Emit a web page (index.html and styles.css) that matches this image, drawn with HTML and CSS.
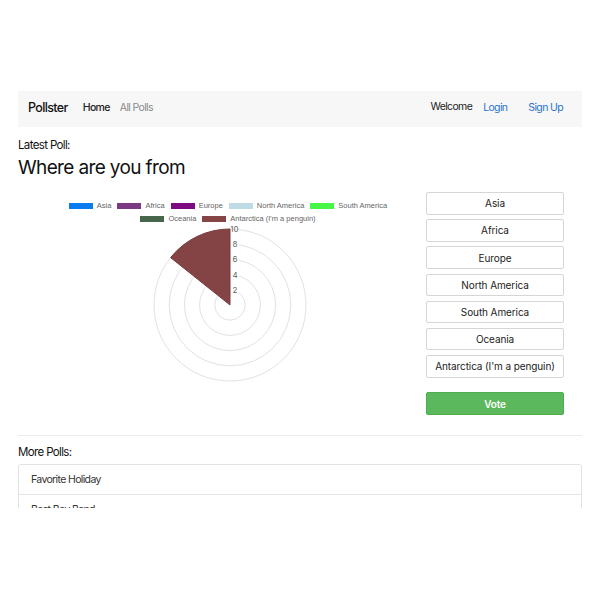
FILE: index.html
```html
<!DOCTYPE html>
<html>
<head>
<meta charset="utf-8">
<title>Pollster</title>
<link rel="stylesheet" href="styles.css">
</head>
<body>
<div class="page">
  <nav class="navbar">
    <span class="brand">Pollster</span>
    <a class="nav-link active">Home</a>
    <a class="nav-link muted">All Polls</a>
    <div class="nav-right">
      <span class="welcome">Welcome</span>
      <a class="nav-link blue">Login</a>
      <a class="nav-link blue signup">Sign Up</a>
    </div>
  </nav>

  <div class="label">Latest Poll:</div>
  <h1 class="title">Where are you from</h1>

  <div class="poll">
    <div class="chart-col">
      <div class="chart-wrap">
        <div class="legend-row">
          <span class="legend-item"><i class="box c-asia"></i>Asia</span>
          <span class="legend-item"><i class="box c-africa"></i>Africa</span>
          <span class="legend-item"><i class="box c-europe"></i>Europe</span>
          <span class="legend-item"><i class="box c-na"></i>North America</span>
          <span class="legend-item"><i class="box c-sa"></i>South America</span>
        </div>
        <div class="legend-row">
          <span class="legend-item"><i class="box c-oceania"></i>Oceania</span>
          <span class="legend-item"><i class="box c-ant"></i>Antarctica (I'm a penguin)</span>
        </div>
        <svg class="polar" width="420" height="160" viewBox="0 0 420 160">
          <g fill="none" stroke="#e2e2e2" stroke-width="1">
            <circle cx="212" cy="80" r="15.2"/>
            <circle cx="212" cy="80" r="30.4"/>
            <circle cx="212" cy="80" r="45.6"/>
            <circle cx="212" cy="80" r="60.8"/>
            <circle cx="212" cy="80" r="76"/>
          </g>
          <g fill="#666" font-size="8" text-anchor="middle">
            <text x="216.5" y="7">10</text>
          </g>
          <path d="M212 80 L212 4 A76 76 0 0 0 152.58 32.61 Z" fill="#844446" stroke="#7a3c3e" stroke-width="1"/>
          <g fill="#ffffff">
            <rect x="213" y="60" width="8" height="9"/>
            <rect x="213" y="45" width="8" height="9"/>
            <rect x="213" y="30" width="8" height="9"/>
            <rect x="213" y="15" width="8" height="9"/>
          </g>
          <g class="ticks" fill="#666" font-size="8" text-anchor="middle">
            <text x="217" y="67.8">2</text>
            <text x="217" y="52.6">4</text>
            <text x="217" y="37.4">6</text>
            <text x="217" y="22.2">8</text>
          </g>
        </svg>
      </div>
    </div>
    <div class="choices">
      <button class="choice">Asia</button>
      <button class="choice">Africa</button>
      <button class="choice">Europe</button>
      <button class="choice">North America</button>
      <button class="choice">South America</button>
      <button class="choice">Oceania</button>
      <button class="choice">Antarctica (I'm a penguin)</button>
      <button class="vote">Vote</button>
    </div>
  </div>

  <hr class="rule">

  <div class="label more">More Polls:</div>
  <ul class="poll-list">
    <li>Favorite Holiday</li>
    <li>Best Boy Band</li>
    <li>Best Pizza Topping</li>
  </ul>
</div>
</body>
</html>
```
FILE: styles.css
```css
html, body {
  margin: 0;
  padding: 0;
  background: #ffffff;
}

body {
  font-family: Inter, "Noto Sans", sans-serif;
  color: #222;
  letter-spacing: -0.04em;
}

.page {
  box-sizing: border-box;
  height: 508px;
  overflow: hidden;
  padding: 91px 18px 0;
}

.navbar {
  box-sizing: border-box;
  display: flex;
  align-items: center;
  height: 36px;
  background: #f7f7f7;
  padding: 0 19px 3px 10px;
}

.brand {
  font-size: 12.5px;
  font-weight: 500;
  color: #111;
  margin-right: 15px;
}

.nav-link {
  font-size: 10.5px;
  margin-right: 10px;
  color: #222;
}

.nav-link.active {
  font-weight: 500;
}

.nav-link.muted {
  color: #8a8a8a;
}

.nav-right {
  margin-left: auto;
  display: flex;
  align-items: center;
}

.welcome {
  font-size: 10.5px;
  color: #222;
  margin-right: 11px;
  position: relative;
  top: -1px;
}

.nav-link.blue {
  color: #2a72cf;
  margin-right: 21px;
}

.nav-link.signup {
  margin-right: 0;
}

.label {
  font-size: 11.5px;
  color: #111;
  margin-top: 11px;
  line-height: 14px;
}

.title {
  font-size: 19px;
  font-weight: 400;
  color: #111;
  margin: 4px 0 0;
  line-height: 24px;
}

.poll {
  display: flex;
  margin-top: 9px;
}

.chart-col {
  width: 408px;
  flex: none;
}

.chart-wrap {
  width: 420px;
  padding-top: 10px;
}

.legend-row {
  display: flex;
  justify-content: center;
  gap: 6px;
  font-family: "Liberation Sans", Arial, sans-serif;
  font-size: 7.5px;
  letter-spacing: 0;
  color: #666;
  height: 13px;
  align-items: center;
}

.legend-item {
  display: flex;
  align-items: center;
}

.box {
  display: inline-block;
  width: 24px;
  height: 6px;
  margin-right: 4px;
}

.c-asia { background: #0a7cf0; }
.c-africa { background: #7b3883; }
.c-europe { background: #7e0a82; }
.c-na { background: #bedbe6; }
.c-sa { background: #46f746; }
.c-oceania { background: #46654a; }
.c-ant { background: #854446; }

.polar {
  display: block;
  margin-top: 0;
  letter-spacing: 0;
}

.choices {
  width: 138px;
  display: flex;
  flex-direction: column;
  gap: 4.7px;
  margin-top: 3px;
}

.choice, .vote {
  box-sizing: border-box;
  height: 22.5px;
  width: 138px;
  font-family: Inter, "Noto Sans", sans-serif;
  font-size: 10px;
  letter-spacing: -0.01em;
  border-radius: 2px;
  padding: 0;
  cursor: pointer;
}

.choice {
  background: #ffffff;
  border: 1px solid #d6d6d6;
  color: #222;
}

.vote {
  margin-top: 10px;
  background: #5cb85c;
  border: 1px solid #4cae4c;
  color: #ffffff;
  font-weight: 600;
}

.rule {
  border: 0;
  border-top: 1px solid #ececec;
  margin: 20px 0 0;
}

.label.more {
  margin-top: 9px;
}

.poll-list {
  list-style: none;
  margin: 5px 0 0;
  padding: 0;
  border: 1px solid #e2e2e2;
  border-radius: 3px;
}

.poll-list li {
  font-size: 10.5px;
  color: #333;
  height: 29px;
  line-height: 29px;
  padding: 0 12px;
  border-bottom: 1px solid #e6e6e6;
}
```
